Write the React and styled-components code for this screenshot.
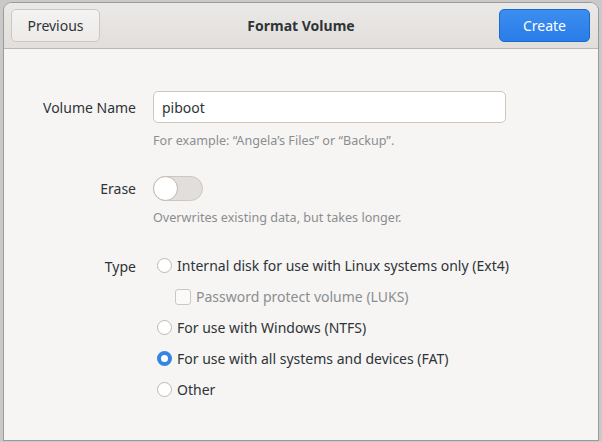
import React from "react";
import styled, { createGlobalStyle } from "styled-components";

const G = createGlobalStyle`
  html,body{margin:0;padding:0;width:602px;height:442px;overflow:hidden;background:#c9c9c9;}
  body{font-family:"Noto Sans","Open Sans",sans-serif;}
`;
const Screen = styled.div`width:602px;height:442px;padding:3px 4px 2px 4px;box-sizing:border-box;`;
const Dialog = styled.div`
  height:100%;background:#f6f5f4;border-radius:8px 8px 0 0;overflow:hidden;
  display:flex;flex-direction:column;box-shadow:0 0 0 1px #9a9a9a;
`;
const Header = styled.div`
  height:46px;flex:none;box-sizing:border-box;display:flex;align-items:center;justify-content:space-between;
  padding:0 8px 0 7px;background:linear-gradient(#ebe9e7,#e1dedb);border-bottom:1px solid #bfb8b1;position:relative;
`;
const Title = styled.div`position:absolute;left:0;right:0;text-align:center;font-weight:700;font-size:14px;color:#2e3436;pointer-events:none;`;
const Btn = styled.div`
  width:${p=>p.w}px;height:33px;box-sizing:border-box;border-radius:5px;display:flex;align-items:center;justify-content:center;
  font-size:14px;position:relative;z-index:1;
  ${p=>p.primary?`background:linear-gradient(#3c8ef0,#2a7ce8);color:#fff;border:1px solid #1b6acb;`:
  `background:linear-gradient(#f4f3f2,#ecebe9);color:#2e3436;border:1px solid #cdc7c2;`}
`;
const Body = styled.div`
  display:grid;grid-template-columns:132px 1fr;column-gap:17px;padding:42px 0 0 0;align-content:start;
`;
const Label = styled.div`text-align:right;font-size:14px;color:#2e3436;align-self:${p=>p.top?"start":"center"};padding-top:${p=>p.pt||0}px;`;
const Input = styled.div`
  width:353px;height:32px;box-sizing:border-box;border:1px solid #cdc7c2;border-radius:5px;background:#fff;
  font-size:14px;color:#2e3436;display:flex;align-items:center;padding-left:8px;
`;
const Hint = styled.div`grid-column:2;font-size:12.6px;color:#8b8e8f;margin:${p=>p.m};`;
const Switch = styled.div`
  width:50px;height:25px;box-sizing:border-box;border-radius:13px;background:#e1dedb;border:1px solid #cdc7c2;position:relative;
  &::after{content:"";position:absolute;left:-1px;top:-1px;width:25px;height:25px;border-radius:50%;background:#fff;border:1px solid #bfb8b1;box-sizing:border-box;}
`;
const Options = styled.div`display:flex;flex-direction:column;gap:0;`;
const Opt = styled.div`
  display:flex;align-items:center;height:31px;gap:5px;font-size:14px;padding-left:${p=>p.indent?22:4}px;
  color:${p=>p.dim?"#8b8e8f":"#2e3436"};
`;
const Radio = styled.span`
  width:15px;height:15px;border-radius:50%;box-sizing:border-box;background:#fff;flex:none;
  border:${p=>p.on?"4px solid #3584e4":"1px solid #bfb8b1"};
`;
const Check = styled.span`width:16px;height:16px;border-radius:3px;box-sizing:border-box;background:#fafafa;border:1px solid #cdc7c2;flex:none;`;

export default function App(){
  const opts=[
    {t:"Internal disk for use with Linux systems only (Ext4)"},
    {t:"Password protect volume (LUKS)",check:true},
    {t:"For use with Windows (NTFS)"},
    {t:"For use with all systems and devices (FAT)",on:true},
    {t:"Other"},
  ];
  return <Screen><G/><Dialog>
    <Header><Btn w={89}>Previous</Btn><Title>Format Volume</Title><Btn w={91} primary>Create</Btn></Header>
    <Body>
      <Label>Volume Name</Label><Input>piboot</Input>
      <Hint m="9px 0 0 0">For example: “Angela’s Files” or “Backup”.</Hint>
      <Label style={{marginTop:27}}>Erase</Label><div style={{marginTop:27}}><Switch/></div>
      <Hint m="8px 0 0 0">Overwrites existing data, but takes longer.</Hint>
      <Label top pt={31}>Type</Label>
      <Options style={{marginTop:24}}>
        {opts.map((o,i)=><Opt key={i} indent={o.check} dim={o.check}>{o.check?<Check/>:<Radio on={o.on}/>}{o.t}</Opt>)}
      </Options>
    </Body>
  </Dialog></Screen>;
}
